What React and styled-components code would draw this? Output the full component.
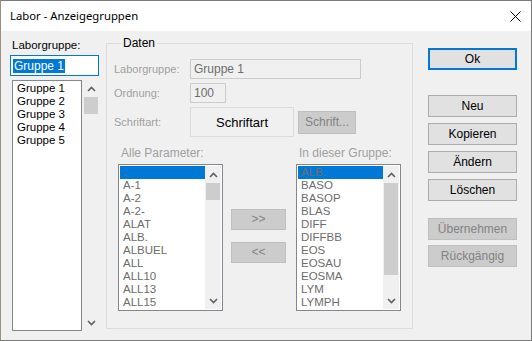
import React from 'react'
import styled, { createGlobalStyle } from 'styled-components'

const GlobalStyle = createGlobalStyle`
  html, body { margin: 0; padding: 0; background: #f0f0f0; }
  body { width: 532px; height: 341px; overflow: hidden; }
`

const UI = `"Liberation Sans", Arial, sans-serif`

// window frame
const Window = styled.div`
  width: 532px;
  height: 341px;
  box-sizing: border-box;
  border: 1px solid #7a7a7a;
  border-left-color: #9a8f80;
  background: #f0f0f0;
  display: flex;
  flex-direction: column;
  font-family: ${UI};
  font-size: 11px;
  line-height: 13px;
  color: #000;
`

const TitleBar = styled.div`
  height: 30px;
  flex: none;
  background: #fff;
  display: flex;
  align-items: center;
  justify-content: space-between;
  padding: 0 10px 0 9px;
`

const Title = styled.span`
  font-family: "Noto Sans", sans-serif;
  font-size: 11.3px;
  color: #000;
  margin-top: -1px;
`

const Body = styled.div`
  flex: 1;
  display: flex;
  align-items: flex-start;
  padding-left: 9px;
`

// left column
const LeftCol = styled.div`
  width: 89px;
  padding-top: 8px;
  display: flex;
  flex-direction: column;
`

const Label = styled.div`
  padding-left: 2px;
  font-size: 11.5px;
  color: ${p => (p.$disabled ? '#a0a0a0' : '#000')};
`

const NameInput = styled.div`
  margin-top: 3px;
  height: 21px;
  box-sizing: border-box;
  border: 1px solid #0078d7;
  background: #fff;
  display: flex;
  align-items: center;
  padding-left: 2px;
`

const Selected = styled.span`
  background: #0078d7;
  color: #fff;
  font-size: 12px;
  line-height: 14px;
  padding: 0 1px;
`

const ListRow = styled.div`
  margin-top: 4px;
  margin-left: 2px;
  display: flex;
  gap: 1px;
  height: 251px;
`

const ListBox = styled.div`
  width: ${p => p.$w}px;
  height: ${p => p.$h}px;
  box-sizing: border-box;
  border: 1px solid #828790;
  background: #fff;
  display: flex;
  padding: 1px;
`

const Items = styled.div`
  flex: 1;
  display: flex;
  flex-direction: column;
  min-width: 0;
`

const Item = styled.div`
  height: 13px;
  padding-left: 3px;
  white-space: nowrap;
  font-size: 11.5px;
  color: ${p => p.$color || '#000'};
  background: ${p => (p.$active ? '#0078d7' : 'transparent')};
`

const ScrollBar = styled.div`
  width: 16px;
  flex: none;
  background: ${p => p.$bg || '#f0f0f0'};
  display: flex;
  flex-direction: column;
`

const Arrow = styled.div`
  height: 17px;
  flex: none;
  display: flex;
  align-items: center;
  justify-content: center;
`

const Track = styled.div`
  flex: 1;
  display: flex;
  flex-direction: column;
`

const Thumb = styled.div`
  height: ${p => p.$h}px;
  margin: 0 1px;
  background: #cdcdcd;
`

// group box
const Group = styled.fieldset`
  margin: 6px 0 0 7px;
  padding: 0 0 0 7px;
  width: 307px;
  height: 292px;
  box-sizing: border-box;
  border: 1px solid #dcdcdc;
  display: flex;
  flex-direction: column;
`

const Legend = styled.legend`
  margin-left: 7px;
  padding: 0 2px;
  font-size: 12px;
  line-height: 13px;
  color: #000;
`

const FormRow = styled.div`
  display: flex;
  align-items: center;
  margin-top: ${p => p.$mt}px;
`

const FieldLabel = styled.div`
  width: 76px;
  flex: none;
  color: #a0a0a0;
`

const Field = styled.div`
  width: ${p => p.$w}px;
  height: 20px;
  box-sizing: border-box;
  border: 1px solid #cccccc;
  background: #f0f0f0;
  color: #6d6d6d;
  padding-left: 3px;
  display: flex;
  align-items: center;
  font-size: 12px;
`

const FontButton = styled.div`
  width: 104px;
  height: 30px;
  box-sizing: border-box;
  border: 1px solid #dcdcdc;
  background: #f0f0f0;
  display: flex;
  align-items: center;
  justify-content: center;
  font-size: 13px;
  color: #000;
`

const Button = styled.div`
  width: ${p => p.$w}px;
  height: ${p => p.$h || 22}px;
  box-sizing: border-box;
  border: ${p => (p.$default ? '2px solid #0078d7' : p.$disabled ? '1px solid #bfbfbf' : '1px solid #adadad')};
  background: ${p => (p.$disabled ? '#cccccc' : '#e1e1e1')};
  color: ${p => (p.$disabled ? '#838383' : '#000')};
  display: flex;
  align-items: center;
  justify-content: center;
  margin-top: ${p => p.$mt || 0}px;
  margin-left: ${p => p.$ml || 0}px;
  font-size: 12px;
`

const Lists = styled.div`
  margin-top: 10px;
  margin-left: 4px;
  display: grid;
  grid-template-columns: 105px 55px 105px;
  column-gap: 9px;
  row-gap: 4px;
`

const ListLabel = styled.div`
  padding-left: 3px;
  color: #a0a0a0;
  font-size: 12px;
`

const Mover = styled.div`
  padding-top: 45px;
  display: flex;
  flex-direction: column;
  gap: 12px;
  margin-left: -1px;
`

// right column
const RightCol = styled.div`
  margin-left: 15px;
  padding-top: 17px;
  width: 89px;
  display: flex;
  flex-direction: column;
`

const Up = () => (
  <svg width="9" height="6" viewBox="0 0 9 6">
    <polyline points="1,5 4.5,1.5 8,5" fill="none" stroke="#606060" strokeWidth="1.6" />
  </svg>
)

const Down = () => (
  <svg width="9" height="6" viewBox="0 0 9 6">
    <polyline points="1,1 4.5,4.5 8,1" fill="none" stroke="#606060" strokeWidth="1.6" />
  </svg>
)

const Scroll = ({ thumb, bg }) => (
  <ScrollBar $bg={bg}>
    <Arrow><Up /></Arrow>
    <Track><Thumb $h={thumb} /></Track>
    <Arrow><Down /></Arrow>
  </ScrollBar>
)

const groups = ['Gruppe 1', 'Gruppe 2', 'Gruppe 3', 'Gruppe 4', 'Gruppe 5']
const allParams = ['.', 'A-1', 'A-2', 'A-2-', 'ALAT', 'ALB.', 'ALBUEL', 'ALL', 'ALL10', 'ALL13', 'ALL15']
const inGroup = ['ALB.', 'BASO', 'BASOP', 'BLAS', 'DIFF', 'DIFFBB', 'EOS', 'EOSAU', 'EOSMA', 'LYM', 'LYMPH']

const ParamList = ({ items, thumb }) => (
  <ListBox $w={105} $h={147}>
    <Items>
      {items.map((t, i) => (
        <Item key={t} $active={i === 0} $color="#6d6d6d">{t}</Item>
      ))}
    </Items>
    <Scroll thumb={thumb} />
  </ListBox>
)

export default function App() {
  return (
    <>
      <GlobalStyle />
      <Window>
        <TitleBar>
          <Title>Labor - Anzeigegruppen</Title>
          <svg width="11" height="11" viewBox="0 0 11 11">
            <path d="M0.5 0.5 L10.5 10.5 M10.5 0.5 L0.5 10.5" stroke="#000" strokeWidth="1" />
          </svg>
        </TitleBar>
        <Body>
          <LeftCol>
            <Label>Laborgruppe:</Label>
            <NameInput><Selected>Gruppe 1</Selected></NameInput>
            <ListRow>
              <ListBox $w={70} $h={251}>
                <Items>
                  {groups.map(g => <Item key={g}>{g}</Item>)}
                </Items>
              </ListBox>
              <Scroll thumb={17} bg="#f0f0f0" />
            </ListRow>
          </LeftCol>

          <Group>
            <Legend>Daten</Legend>
            <FormRow $mt={9}>
              <FieldLabel>Laborgruppe:</FieldLabel>
              <Field $w={171}>Gruppe 1</Field>
            </FormRow>
            <FormRow $mt={4}>
              <FieldLabel>Ordnung:</FieldLabel>
              <Field $w={36}>100</Field>
            </FormRow>
            <FormRow $mt={4}>
              <FieldLabel>Schriftart:</FieldLabel>
              <FontButton>Schriftart</FontButton>
              <Button $w={58} $h={23} $disabled $ml={4}>Schrift...</Button>
            </FormRow>
            <Lists>
              <ListLabel>Alle Parameter:</ListLabel>
              <div />
              <ListLabel>In dieser Gruppe:</ListLabel>
              <ParamList items={allParams} thumb={17} />
              <Mover>
                <Button $w={55} $h={21} $disabled>&gt;&gt;</Button>
                <Button $w={55} $h={21} $disabled>&lt;&lt;</Button>
              </Mover>
              <ParamList items={inGroup} thumb={92} />
            </Lists>
          </Group>

          <RightCol>
            <Button $w={89} $default>Ok</Button>
            <Button $w={89} $mt={25}>Neu</Button>
            <Button $w={89} $mt={6}>Kopieren</Button>
            <Button $w={89} $mt={6}>Ändern</Button>
            <Button $w={89} $mt={6}>Löschen</Button>
            <Button $w={89} $mt={17} $disabled>Übernehmen</Button>
            <Button $w={89} $mt={5} $disabled>Rückgängig</Button>
          </RightCol>
        </Body>
      </Window>
    </>
  )
}
